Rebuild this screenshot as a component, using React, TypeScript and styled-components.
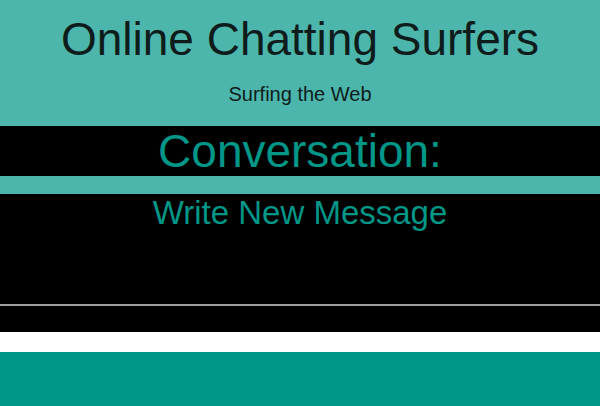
import * as React from "react";
import styled, { createGlobalStyle } from "styled-components";

const GlobalStyle = createGlobalStyle`
  html, body {
    margin: 0;
    padding: 0;
    background: #ffffff;
    font-family: "Liberation Sans", Arial, Helvetica, sans-serif;
  }
`;

const Header = styled.header`
  background-color: #4db6ac;
  height: 126px;
  box-sizing: border-box;
  padding-top: 13px;
  text-align: center;
`;

const Title = styled.h1`
  margin: 0;
  font-size: 46px;
  line-height: 52px;
  font-weight: 400;
  color: #0e1c1b;
`;

const Subtitle = styled.p`
  margin: 17px 0 0;
  font-size: 20px;
  line-height: 24px;
  color: #0e1c1b;
`;

const ConversationBar = styled.h2`
  margin: 0;
  background-color: #000;
  color: #009688;
  font-size: 46px;
  line-height: 50px;
  font-weight: 400;
  text-align: center;
`;

const Divider = styled.div`
  height: 18px;
  background-color: #4db6ac;
`;

const Compose = styled.section`
  background-color: #000;
  height: 138px;
  display: flex;
  flex-direction: column;
`;

const ComposeTitle = styled.h3`
  margin: 0;
  color: #009688;
  font-size: 33px;
  line-height: 38px;
  font-weight: 400;
  text-align: center;
`;

const MessageInput = styled.input`
  display: block;
  width: 100%;
  height: 74px;
  box-sizing: border-box;
  background: #000;
  color: #fff;
  border: none;
  border-bottom: 2px solid #9e9e9e;
  outline: none;
  font-family: inherit;
  font-size: 18px;
  padding: 0;
`;

const Gap = styled.div`
  height: 20px;
  background: #fff;
`;

const Footer = styled.footer`
  background-color: #009688;
  height: 54px;
`;

const App = () => {
  const [message, setMessage] = React.useState("");
  return (
    <>
      <GlobalStyle />
      <Header>
        <Title>Online Chatting Surfers</Title>
        <Subtitle>Surfing the Web</Subtitle>
      </Header>
      <ConversationBar>Conversation:</ConversationBar>
      <Divider />
      <Compose>
        <ComposeTitle>Write New Message</ComposeTitle>
        <MessageInput
          value={message}
          onChange={(e) => setMessage(e.target.value)}
        />
      </Compose>
      <Gap />
      <Footer />
    </>
  );
};

export default App;
